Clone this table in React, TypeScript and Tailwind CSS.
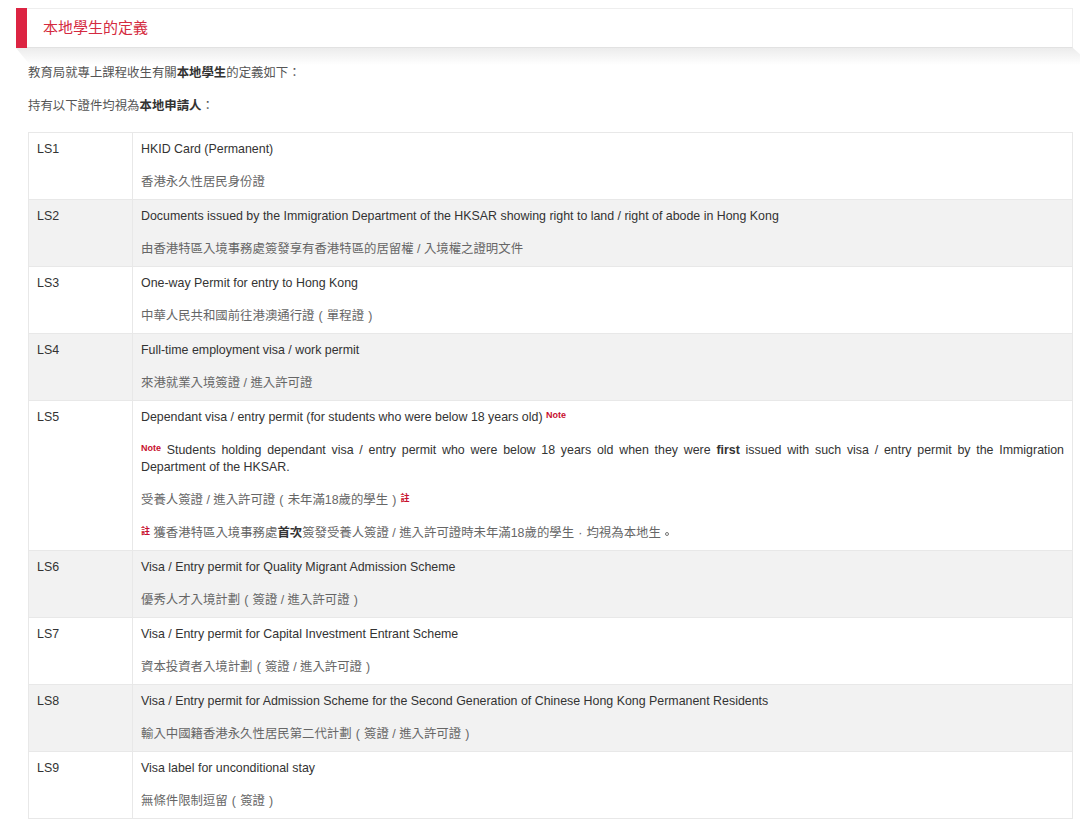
import React from "react";

const FONT = '"Liberation Sans", Arial, "Noto Sans CJK TC", sans-serif';

type Row = { id: string; en: React.ReactNode; zh: React.ReactNode };

const NoteSup = () => (
  <span className="text-[9px] font-bold text-[#c8102e] align-[3px] leading-none">Note</span>
);
const ZhuSup = () => (
  <span className="text-[9px] font-bold text-[#c8102e] align-[3px] leading-none">註</span>
);

const L = () => <span className="inline-block w-[1em] text-center">(</span>;
const R = () => <span className="inline-block w-[1em] text-center">)</span>;
const Comma = () => <span className="inline-block w-[1em] text-center">·</span>;
const Period = () => (
  <span className="inline-flex w-[1em] justify-center align-[1px]">
    <span className="inline-block h-[4px] w-[4px] rounded-full border border-[#777777]" />
  </span>
);

const rows: Row[] = [
  { id: "LS1", en: "HKID Card (Permanent)", zh: "香港永久性居民身份證" },
  {
    id: "LS2",
    en: "Documents issued by the Immigration Department of the HKSAR showing right to land / right of abode in Hong Kong",
    zh: "由香港特區入境事務處簽發享有香港特區的居留權 / 入境權之證明文件",
  },
  {
    id: "LS3",
    en: "One-way Permit for entry to Hong Kong",
    zh: (
      <>
        中華人民共和國前往港澳通行證<L />單程證<R />
      </>
    ),
  },
  { id: "LS4", en: "Full-time employment visa / work permit", zh: "來港就業入境簽證 / 進入許可證" },
  {
    id: "LS5",
    en: (
      <>
        Dependant visa / entry permit (for students who were below 18 years old) <NoteSup />
      </>
    ),
    zh: null,
  },
  {
    id: "LS6",
    en: "Visa / Entry permit for Quality Migrant Admission Scheme",
    zh: (
      <>
        優秀人才入境計劃<L />簽證 / 進入許可證<R />
      </>
    ),
  },
  {
    id: "LS7",
    en: "Visa / Entry permit for Capital Investment Entrant Scheme",
    zh: (
      <>
        資本投資者入境計劃<L />簽證 / 進入許可證<R />
      </>
    ),
  },
  {
    id: "LS8",
    en: "Visa / Entry permit for Admission Scheme for the Second Generation of Chinese Hong Kong Permanent Residents",
    zh: (
      <>
        輸入中國籍香港永久性居民第二代計劃<L />簽證 / 進入許可證<R />
      </>
    ),
  },
  {
    id: "LS9",
    en: "Visa label for unconditional stay",
    zh: (
      <>
        無條件限制逗留<L />簽證<R />
      </>
    ),
  },
];

export default function App() {
  return (
    <div lang="zh-Hant" className="bg-white min-h-[826px] w-[1080px] overflow-hidden" style={{ fontFamily: FONT }}>
      <div className="pt-2 pl-4 pr-[7px]">
        <div className="relative">
          <div className="relative z-10 flex h-10 items-center border border-[#eeeeee] border-b-[#e2e2e2] bg-white">
            <div className="h-10 w-[11px] -ml-px -my-px self-stretch bg-[#dc2442]" />
            <div className="pl-[16px] text-[15px] text-[#d42a40]">本地學生的定義</div>
          </div>
          <div
            className="absolute left-0 right-[-8px] top-10 h-[17px] bg-gradient-to-b from-[#ececec] to-[#ffffff]"
            style={{ clipPath: "polygon(0 0, calc(100% - 8px) 0, 100% 7px, 100% 100%, 14px 100%)" }}
          />
        </div>
      </div>

      <div className="px-[28px] pr-[7px] text-[12.4px] text-[#555555]">
        <p className="mt-[17px] leading-[17px]">
          教育局就專上課程收生有關<b className="text-[#333333]">本地學生</b>的定義如下：
        </p>
        <p className="mt-[16px] leading-[17px]">
          持有以下證件均視為<b className="text-[#333333]">本地申請人</b>：
        </p>

        <table className="mt-[17px] w-[1045px] border-collapse border border-[#ececec] text-[12.4px] leading-[17px]">
          <tbody>
            {rows.map((r, i) => (
              <tr key={r.id} className={i % 2 === 1 ? "bg-[#f2f2f2]" : "bg-white"}>
                <td className="w-[104px] border border-[#e8e8e8] px-2 py-2 align-top text-[#333333]">{r.id}</td>
                <td className="border border-[#e8e8e8] px-2 py-2 align-top">
                  <p className="text-[#333333]">{r.en}</p>
                  {r.id === "LS5" ? (
                    <>
                      <p className="mt-[16px] text-justify text-[#333333]">
                        <NoteSup /> Students holding dependant visa / entry permit who were below 18 years old when they were{" "}
                        <b>first</b> issued with such visa / entry permit by the Immigration Department of the HKSAR.
                      </p>
                      <p className="mt-[16px] text-[#666666]">
                        受養人簽證 / 進入許可證<L />未年滿18歲的學生<R />
                        <ZhuSup />
                      </p>
                      <p className="mt-[16px] text-[#666666]">
                        <ZhuSup /> 獲香港特區入境事務處<b className="text-[#333333]">首次</b>簽發受養人簽證 / 進入許可證時未年滿18歲的學生
                        <Comma />
                        均視為本地生
                        <Period />
                      </p>
                    </>
                  ) : (
                    <p className="mt-[16px] text-[#666666]">{r.zh}</p>
                  )}
                </td>
              </tr>
            ))}
          </tbody>
        </table>
      </div>
    </div>
  );
}
